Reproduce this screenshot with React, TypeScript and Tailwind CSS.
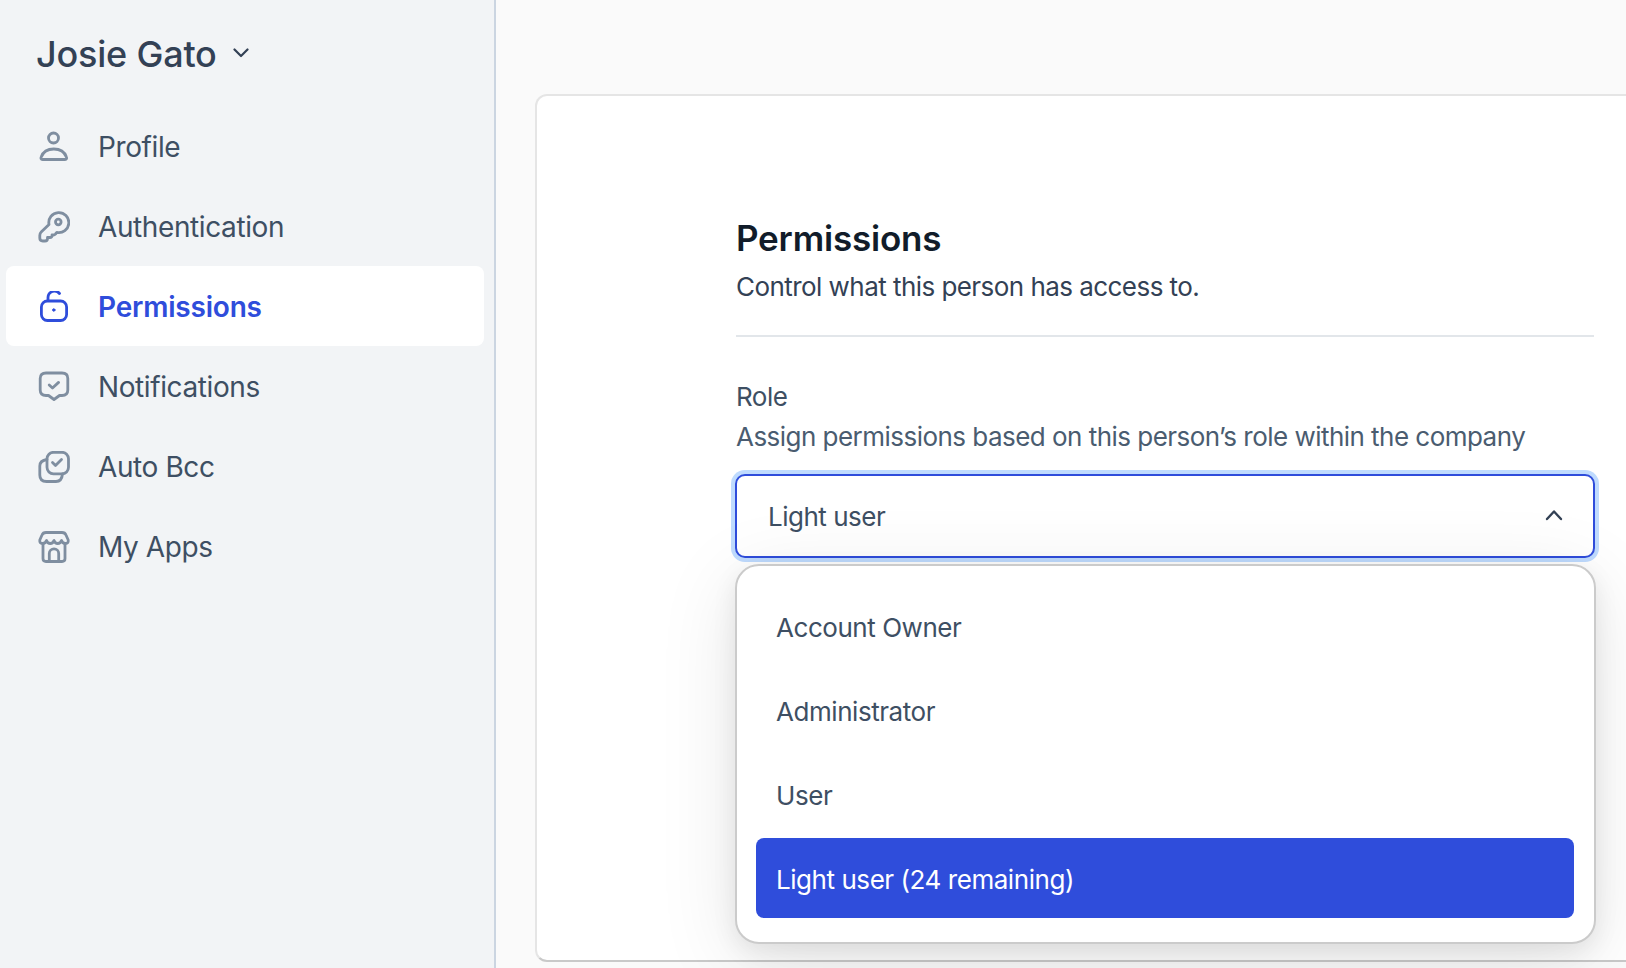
const navItems = [
  { label: 'Profile', icon: 'profile' },
  { label: 'Authentication', icon: 'key' },
  { label: 'Permissions', icon: 'lock', active: true },
  { label: 'Notifications', icon: 'chat' },
  { label: 'Auto Bcc', icon: 'copy' },
  { label: 'My Apps', icon: 'store' },
];

const roles = ['Account Owner', 'Administrator', 'User', 'Light user (24 remaining)'];

function NavIcon({ name }: { name: string }) {
  return (
    <svg
      viewBox="0 0 32 32"
      fill="none"
      stroke="currentColor"
      strokeWidth="2.8"
      strokeLinecap="round"
      strokeLinejoin="round"
      className="w-8 h-8 shrink-0"
    >
      {name === 'profile' && (
        <>
          <circle cx="15.5" cy="7" r="5" />
          <path d="M4.5 28.5C3 28.5 2.6 27.3 3.2 26C5 21 9.8 18 15.8 18C21.8 18 26.6 21 28.4 26C29 27.3 28.6 28.5 27 28.5Z" />
        </>
      )}
      {name === 'key' && (
        <>
          <circle cx="20.3" cy="11" r="2.8" />
          <path d="M11 13.5L3.2 21Q1.8 22.4 1.8 24.5V27Q1.8 30 4.8 30H7Q9.5 30 9.5 27.5V26.5H12Q14 26.5 14 24.8V24H15.5Q16.5 24 17.5 23L18.8 21.4A10 10 0 1 0 11 13.5Z" />
        </>
      )}
      {name === 'lock' && (
        <>
          <rect x="3.4" y="10" width="25.2" height="19.5" rx="6" />
          <path d="M10 9.5V6.5A6.5 6.5 0 0 1 21.5 2.5" />
          <circle cx="15.8" cy="19" r="1.2" fill="currentColor" strokeWidth="1" />
        </>
      )}
      {name === 'chat' && (
        <>
          <path d="M8 2H24Q29.8 2 29.8 7.5V19Q29.8 24.5 24 24.5H21.5L16 28.5L10.5 24.5H8Q2.2 24.5 2.2 19V7.5Q2.2 2 8 2Z" />
          <path d="M11.2 14L14.5 17L20.6 11.4" />
        </>
      )}
      {name === 'copy' && (
        <>
          <rect x="9" y="1.3" width="21.5" height="21.5" rx="6.5" />
          <path d="M14.5 11.5L17.5 14.5L23.5 8.5" />
          <path d="M9 8.5Q1.8 9.5 1.8 15V24Q1.8 30.5 8.5 30.5H18Q23.8 30.5 24.5 23" />
        </>
      )}
      {name === 'store' && (
        <>
          <path d="M8 1.5H24Q27 1.5 28 4L30.2 9Q30.6 12.5 27.5 12.5Q24.5 12.5 23.5 9.5Q22.5 12.5 19.7 12.5Q17 12.5 16 9.5Q15 12.5 12.3 12.5Q9.5 12.5 8.5 9.5Q7.5 12.5 4.5 12.5Q1.4 12.5 1.8 9L4 4Q5 1.5 8 1.5Z" />
          <path d="M5 12.5V27.5Q5 30.5 8 30.5H24Q27 30.5 27 27.5V12.5" />
          <path d="M11.3 30.5V22.5A4.7 4.7 0 0 1 20.7 22.5V30.5" />
        </>
      )}
    </svg>
  );
}

export default function App() {
  return (
    <div className="w-[1626px] h-[968px] overflow-hidden flex bg-[#fafafa] text-[#334155] font-['Inter',sans-serif]">
      {/* sidebar */}
      <aside className="w-[496px] shrink-0 h-full bg-[#f2f4f6] border-r-2 border-[#cbd5e1] pl-[6px] pr-[10px]">
        <div className="h-[106px] pl-[30px] pt-[32px] flex items-start gap-[16px]">
          <span className="text-[36px] leading-[44px] font-medium tracking-[-0.2px] text-[#334155]">Josie Gato</span>
          <svg viewBox="0 0 16 10" fill="none" stroke="#334155" strokeWidth="2.2" strokeLinecap="round" strokeLinejoin="round" className="w-4 h-[10px] mt-[16px]">
            <path d="M1.5 1.5L8 8L14.5 1.5" />
          </svg>
        </div>
        <nav className="flex flex-col">
          {navItems.map((item) => (
            <div
              key={item.label}
              className={`h-20 rounded-[8px] pl-[32px] pt-[2px] flex items-center gap-[28px] ${item.active ? 'bg-white text-[#2f4ddb]' : 'text-[#7f8ea0]'}`}
            >
              <NavIcon name={item.icon} />
              <span className={`text-[28px] ${item.active ? 'font-semibold tracking-[-0.2px]' : 'tracking-[-0.4px] text-[#3e4f63]'}`}>{item.label}</span>
            </div>
          ))}
        </nav>
      </aside>

      {/* main */}
      <main className="flex-1 min-w-0 pl-[39px] pt-[94px]">
        <div className="relative w-[1200px] h-[868px] bg-white rounded-[12px] border-2 border-[#e5e5e5] border-b-[#c9c9c9] pl-[199px] pt-[117px]">
          <div className="w-[858px]">
            <h1 className="text-[35px] leading-[50px] font-semibold tracking-[-0.2px] text-[#111c2a]">Permissions</h1>
            <p className="text-[26px] leading-[30px] mt-[9px] tracking-[-0.55px] text-[#334155]">Control what this person has access to.</p>
            <div className="h-[2px] bg-[#e2e6ea] mt-[33px]" />
            <p className="text-[26px] leading-[30px] mt-[45px] tracking-[-0.5px] text-[#3e4f63]">Role</p>
            <p className="text-[26px] leading-[30px] mt-[10px] tracking-[-0.53px] text-[#4a5c70]">Assign permissions based on this person’s role within the company</p>
            <div className="mt-[22px] -ml-px h-[84px] w-[860px] rounded-[10px] border-2 border-[#2f4ddb] ring-4 ring-[#bfdbfe] bg-white pl-[31px] pr-[30px] flex items-center justify-between">
              <span className="text-[26px] tracking-[-0.5px] text-[#3e4f63]">Light user</span>
              <svg viewBox="0 0 18 12" fill="none" stroke="#334155" strokeWidth="2.4" strokeLinecap="round" strokeLinejoin="round" className="w-[18px] h-3 -mt-[2px]">
                <path d="M2 10L9 2.5L16 10" />
              </svg>
            </div>
          </div>
          {/* dropdown over content */}
          <div className="absolute left-[198px] top-[468px] w-[861px] h-[380px] bg-white rounded-[24px] border-2 border-[#cbcbcb] shadow-[0_8px_24px_rgba(0,0,0,0.08),0_16px_80px_rgba(0,0,0,0.10)] pt-[20px] pl-[19px] pr-[20px] flex flex-col gap-1">
            {roles.map((role, i) => (
              <div
                key={role}
                className={`h-20 shrink-0 rounded-[8px] pl-[20px] pt-[2px] flex items-center text-[26px] tracking-[-0.45px] ${i === 3 ? 'bg-[#2f4ddb] text-white' : 'text-[#3e4f63]'}`}
              >
                {role}
              </div>
            ))}
          </div>
        </div>
      </main>
    </div>
  );
}
